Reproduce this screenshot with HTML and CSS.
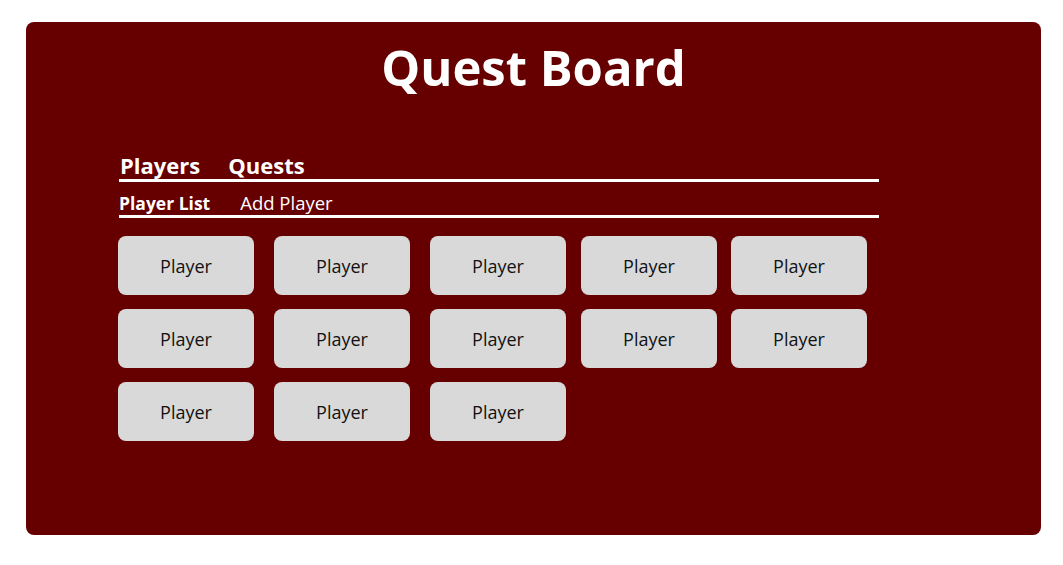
FILE: index.html
```html
<!DOCTYPE html>
<html>
<head>
<meta charset="utf-8">
<link rel="stylesheet" href="styles.css">
</head>
<body>
<div class="board">
  <h1 class="title">Quest Board</h1>
  <div class="content">
    <nav class="tabs">
      <span class="tab">Players</span>
      <span class="tab">Quests</span>
    </nav>
    <nav class="subtabs">
      <span class="subtab active">Player List</span>
      <span class="subtab">Add Player</span>
    </nav>
    <div class="players">
      <div class="player">Player</div>
      <div class="player">Player</div>
      <div class="player">Player</div>
      <div class="player">Player</div>
      <div class="player">Player</div>
      <div class="player">Player</div>
      <div class="player">Player</div>
      <div class="player">Player</div>
      <div class="player">Player</div>
      <div class="player">Player</div>
      <div class="player">Player</div>
      <div class="player">Player</div>
      <div class="player">Player</div>
    </div>
  </div>
</div>
</body>
</html>
```

FILE: styles.css
```css
html, body {
  margin: 0;
  padding: 0;
  background: #ffffff;
  font-family: "Open Sans", "Noto Sans", sans-serif;
}
body {
  padding: 22px 22px 0 26px;
}
.board {
  width: 1015px;
  height: 513px;
  box-sizing: border-box;
  background: #660000;
  border-radius: 8px;
  color: #ffffff;
  padding-top: 11px;
}
.title {
  margin: 0;
  text-align: center;
  font-size: 49px;
  font-weight: 700;
  line-height: 68px;
}
.content {
  margin: 0 0 0 93px;
  width: 760px;
  padding-top: 50px;
}
.tabs {
  display: flex;
  gap: 28px;
  border-bottom: 3px solid #ffffff;
  padding-left: 1px;
  height: 28px;
}
.tab {
  font-size: 22px;
  font-weight: 700;
  line-height: 28px;
}
.subtabs {
  display: flex;
  gap: 30px;
  border-bottom: 3px solid #ffffff;
  margin-top: 9px;
  height: 24px;
}
.subtab {
  font-size: 18.5px;
  font-weight: 400;
  line-height: 24px;
}
.subtab.active {
  font-size: 17.5px;
  font-weight: 700;
}
.players {
  display: grid;
  grid-template-columns: 156px 156px 151px 150px 136px;
  row-gap: 14px;
  margin-top: 18px;
  margin-left: -1px;
}
.player {
  width: 136px;
  height: 59px;
  background: #d9d9d9;
  border-radius: 8px;
  color: #111111;
  font-size: 18px;
  display: flex;
  align-items: center;
  justify-content: center;
}
```
